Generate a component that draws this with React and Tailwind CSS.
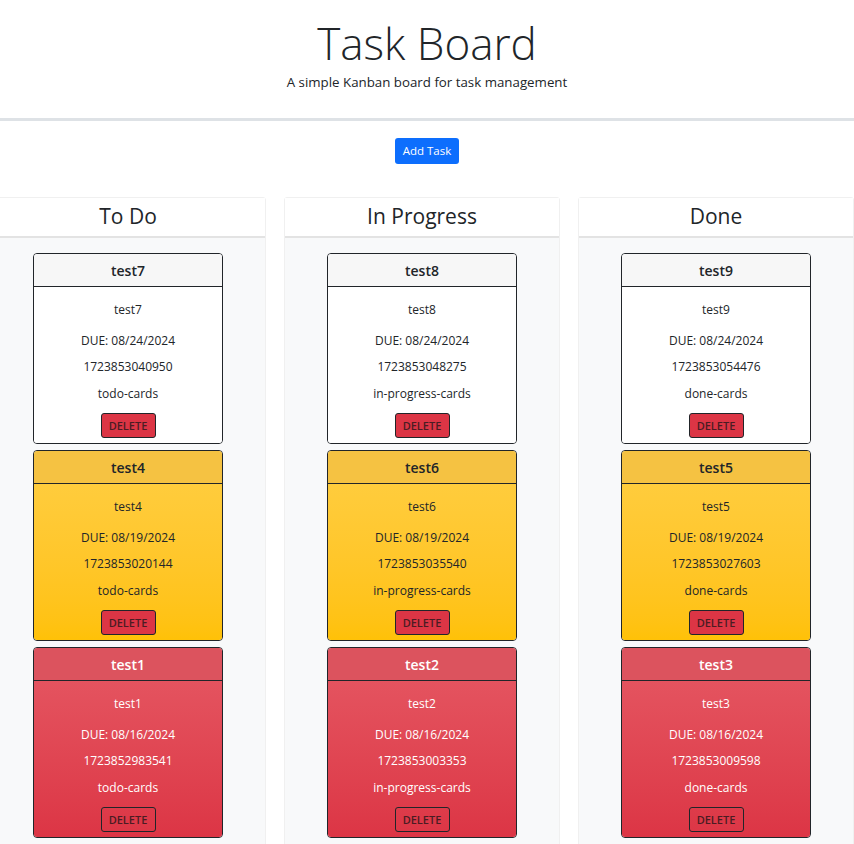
const columns = [
  {
    title: "To Do",
    status: "todo-cards",
    cards: [
      { name: "test7", due: "08/24/2024", id: "1723853040950", tone: "plain" },
      { name: "test4", due: "08/19/2024", id: "1723853020144", tone: "warn" },
      { name: "test1", due: "08/16/2024", id: "1723852983541", tone: "late" },
    ],
  },
  {
    title: "In Progress",
    status: "in-progress-cards",
    cards: [
      { name: "test8", due: "08/24/2024", id: "1723853048275", tone: "plain" },
      { name: "test6", due: "08/19/2024", id: "1723853035540", tone: "warn" },
      { name: "test2", due: "08/16/2024", id: "1723853003353", tone: "late" },
    ],
  },
  {
    title: "Done",
    status: "done-cards",
    cards: [
      { name: "test9", due: "08/24/2024", id: "1723853054476", tone: "plain" },
      { name: "test5", due: "08/19/2024", id: "1723853027603", tone: "warn" },
      { name: "test3", due: "08/16/2024", id: "1723853009598", tone: "late" },
    ],
  },
];

const tones = {
  plain: {
    head: "bg-[#f7f7f7] text-[#212529]",
    body: "bg-white text-[#212529]",
    btn: "bg-[#dc3545]",
  },
  warn: {
    head: "bg-[#f5c242] text-[#212529]",
    body: "bg-gradient-to-b from-[#ffcc3c] to-[#ffc107] text-[#212529]",
    btn: "bg-[#dc3545]",
  },
  late: {
    head: "bg-[#dc535e] text-white",
    body: "bg-gradient-to-b from-[#e4535f] to-[#dc3545] text-white",
    btn: "bg-transparent",
  },
};

function TaskCard({ card, status }) {
  const t = tones[card.tone];
  return (
    <div className="w-[190px] rounded-[4px] border border-[#212529] overflow-hidden">
      <div className={`h-[33px] flex items-center justify-center border-b border-[#212529] text-[14px] font-semibold ${t.head}`}>
        {card.name}
      </div>
      <div className={`flex flex-col items-center pt-[14px] pb-[5px] text-[12px] leading-[18px] ${t.body}`}>
        <p>{card.name}</p>
        <p className="mt-[13px]">DUE: {card.due}</p>
        <p className="mt-[8px]">{card.id}</p>
        <p className="mt-[9px]">{status}</p>
        <button
          className={`mt-[10px] h-[25px] w-[55px] rounded-[3px] border border-[#212529] text-[11px] font-semibold text-[#4a1c23] ${t.btn}`}
        >
          DELETE
        </button>
      </div>
    </div>
  );
}

function Column({ col }) {
  return (
    <div className="w-[276px] shrink-0 bg-[#f8f9fa] border border-[#f0f0f0] rounded-[3px] pb-6">
      <div className="h-[40px] bg-white border-b-2 border-[#e3e3e3] flex items-center justify-center text-[21px] text-[#212529]">
        {col.title}
      </div>
      <div className="flex flex-col items-center gap-[6px] pt-[15px]">
        {col.cards.map((c) => (
          <TaskCard key={c.id} card={c} status={col.status} />
        ))}
      </div>
    </div>
  );
}

export default function App() {
  return (
    <div className="min-h-screen bg-white overflow-x-hidden font-['Open_Sans',sans-serif] text-[#212529]">
      <header className="h-[121px] border-b-[3px] border-[#dee2e6] flex flex-col items-center">
        <h1 className="mt-[14px] text-[44px] leading-[58px] font-light">Task Board</h1>
        <p className="text-[13.3px] leading-[20px]">A simple Kanban board for task management</p>
      </header>

      <div className="flex justify-center mt-[17px]">
        <button className="h-[26px] px-[8px] rounded-[3px] bg-[#0d6efd] text-white text-[11.5px]">Add Task</button>
      </div>

      <div className="flex gap-[18px] ml-[-10px] mt-[33px]">
        {columns.map((col) => (
          <Column key={col.title} col={col} />
        ))}
      </div>
    </div>
  );
}
